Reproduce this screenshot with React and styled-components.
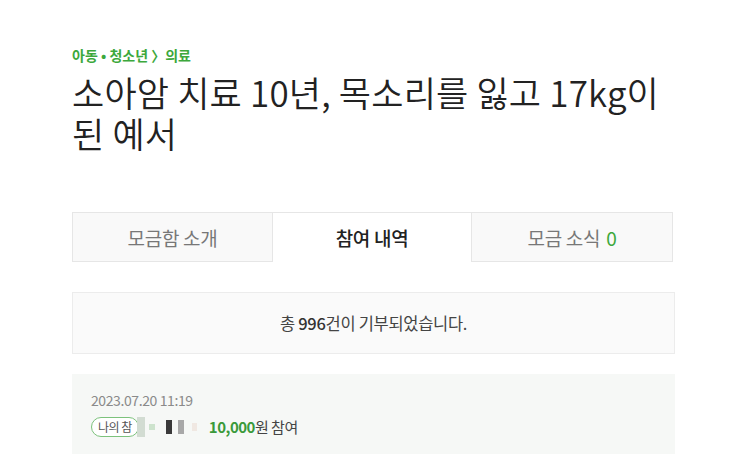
import React from 'react';
import styled, {createGlobalStyle} from 'styled-components';

const GlobalStyle = createGlobalStyle`
  body {
    margin: 0;
    background: #fff;
    font-family: "Noto Sans CJK KR", "Noto Sans", sans-serif;
    color: #222;
  }
`;

const Page = styled.div({
  width: 603,
  padding: '44px 0 0 72px',
  height: 410,
  overflow: 'hidden',
});

const Breadcrumb = styled.div({
  fontSize: 14,
  fontWeight: 700,
  color: '#3ca83c',
  letterSpacing: 0,
  lineHeight: '22px',
});

const Title = styled.h1({
  margin: '5px 0 0',
  fontSize: 35,
  fontWeight: 350,
  lineHeight: '41px',
  letterSpacing: 0.2,
  color: '#222',
});

const Tabs = styled.div({
  display: 'grid',
  gridTemplateColumns: '200px 200px 201px',
  marginTop: 59,
  height: 50,
});

const Tab = styled.div`
  display: flex;
  align-items: center;
  justify-content: center;
  font-size: 19px;
  letter-spacing: -0.3px;
  box-sizing: border-box;
  border-top: 1px solid #e6e6e6;
  border-bottom: ${p => p.$active ? 'none' : '1px solid #e6e6e6'};
  border-left: ${p => p.$first || p.$active ? '1px solid #e6e6e6' : 'none'};
  border-right: ${p => p.$active || p.$last ? '1px solid #e6e6e6' : 'none'};
  background: ${p => p.$active ? '#fff' : '#f9f9f9'};
  color: ${p => p.$active ? '#222' : '#777'};
  font-weight: ${p => p.$active ? 500 : 400};
`;

const Count = styled.span({
  color: '#3ca83c',
  marginLeft: 6,
});

const Summary = styled.div({
  marginTop: 30,
  height: 62,
  boxSizing: 'border-box',
  border: '1px solid #ececec',
  background: '#fafafa',
  display: 'flex',
  alignItems: 'center',
  justifyContent: 'center',
  fontSize: 16.5,
  color: '#444',
  letterSpacing: -0.3,
});

const Strong = styled.b({
  fontWeight: 500,
  color: '#333',
});

const Item = styled.div({
  marginTop: 20,
  background: '#f6f8f6',
  padding: '16px 19px',
  height: 81,
  boxSizing: 'border-box',
});

const Date = styled.div({
  fontSize: 14,
  color: '#8a8a8a',
  letterSpacing: -0.4,
  lineHeight: '20px',
});

const Row = styled.div({
  display: 'flex',
  alignItems: 'center',
  marginTop: 6,
});

const Badge = styled.span({
  display: 'inline-flex',
  alignItems: 'center',
  height: 18,
  padding: '0 6px',
  border: '1px solid #7cc27c',
  borderRadius: 10,
  fontSize: 12,
  color: '#555',
  background: '#fff',
  letterSpacing: -0.5,
  marginRight: -2,
});

const Mosaic = styled.span({
  display: 'inline-flex',
  alignItems: 'center',
  width: 72,
  height: 20,
});

const Pixel = styled.i`
  display: block;
  width: ${p => p.$w}px;
  height: ${p => p.$h}px;
  background: ${p => p.$c};
  margin-right: ${p => p.$gap}px;
`;

const Amount = styled.span({
  fontSize: 15,
  color: '#444',
  letterSpacing: -0.5,
});

const Green = styled.b({
  color: '#3a9a3a',
  fontWeight: 700,
});

const pixels = [
  {w: 8, h: 20, c: '#d2dcd2', gap: 4},
  {w: 6, h: 6, c: '#cde3cd', gap: 11},
  {w: 6, h: 14, c: '#3a3a3a', gap: 6},
  {w: 6, h: 14, c: '#a8a8a8', gap: 8},
  {w: 5, h: 8, c: '#f0e8e2', gap: 0},
];

export default function App() {
  return (
    <Page>
      <GlobalStyle />
      <Breadcrumb>아동 • 청소년 〉의료</Breadcrumb>
      <Title>소아암 치료 10년, 목소리를 잃고 17kg이<br />된 예서</Title>
      <Tabs>
        <Tab $first>모금함 소개</Tab>
        <Tab $active>참여 내역</Tab>
        <Tab $last>모금 소식<Count>0</Count></Tab>
      </Tabs>
      <Summary>총&nbsp;<Strong>996</Strong>건이 기부되었습니다.</Summary>
      <Item>
        <Date>2023.07.20 11:19</Date>
        <Row>
          <Badge>나의 참</Badge>
          <Mosaic>
            {pixels.map((p, i) => (
              <Pixel key={i} $w={p.w} $h={p.h} $c={p.c} $gap={p.gap} />
            ))}
          </Mosaic>
          <Amount><Green>10,000</Green>원 참여</Amount>
        </Row>
      </Item>
    </Page>
  );
}
